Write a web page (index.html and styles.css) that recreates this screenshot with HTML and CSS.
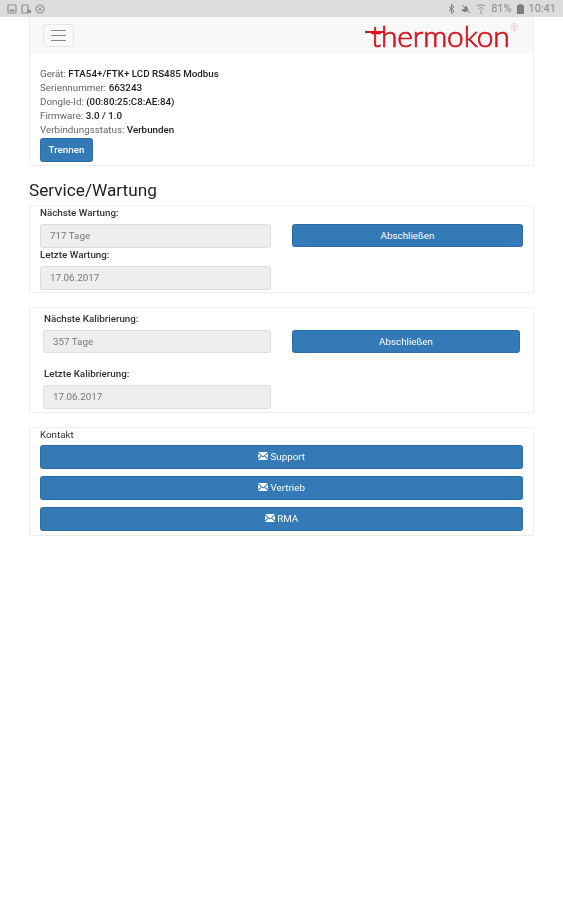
FILE: index.html
```html
<!DOCTYPE html>
<html lang="de">
<head>
    <meta charset="UTF-8">
    <meta name="viewport" content="width=device-width, initial-scale=1.0">
    <title>Thermokon</title>
    <link rel="stylesheet" href="styles.css">
</head>
<body>
    <div class="statusbar">
        <div class="status-left">
            <svg width="10" height="10" viewBox="0 0 10 10"><rect x="1" y="1" width="8" height="8" rx="1" fill="none" stroke="#8f8f8f" stroke-width="1.2"/><rect x="2.5" y="5.5" width="5" height="2" fill="#8f8f8f"/></svg>
            <svg width="10" height="10" viewBox="0 0 10 10"><rect x="1" y="1" width="6" height="8" rx="1" fill="none" stroke="#8f8f8f" stroke-width="1.2"/><rect x="6" y="6" width="4" height="3" fill="#8f8f8f"/></svg>
            <svg width="10" height="10" viewBox="0 0 10 10"><circle cx="5" cy="5" r="4" fill="none" stroke="#8f8f8f" stroke-width="1.2"/><path d="M3 3l4 4M7 3L3 7" stroke="#8f8f8f"/></svg>
        </div>
        <div class="status-right">
            <svg width="8" height="10" viewBox="0 0 8 10"><path d="M1 3l5 4-2.5 2.500V.5L6 3 1 7" fill="none" stroke="#7f7f7f" stroke-width="1"/></svg>
            <svg width="10" height="10" viewBox="0 0 10 10"><path d="M1 1l8 8M1 6l3-1 1-3 2 4-3 2z" fill="#7f7f7f" stroke="#7f7f7f"/></svg>
            <svg width="10" height="10" viewBox="0 0 10 10"><path d="M1 2c2.500-1.500 5.500-1.500 8 0M2.500 4.500c1.500-1 3.500-1 5 0M4 7c.6-.4 1.400-.4 2 0M5 8v2" fill="none" stroke="#8f8f8f"/></svg>
            <span class="status-pct">81%</span>
            <svg width="7" height="10" viewBox="0 0 7 10"><rect x="2" y="0" width="3" height="1" fill="#7f7f7f"/><rect x="0" y="1" width="7" height="9" fill="#7f7f7f"/></svg>
            <span>10:41</span>
        </div>
    </div>

    <div class="page">
        <div class="panel panel-top">
            <div class="navbar">
                <button class="toggle" type="button"><span></span><span></span><span></span></button>
                <div class="logo">thermokon<sup>®</sup></div>
            </div>
            <div class="device">
                <div class="line">Gerät: <b>FTA54+/FTK+ LCD RS485 Modbus</b></div>
                <div class="line">Seriennummer: <b>663243</b></div>
                <div class="line">Dongle-Id: <b>(00:80:25:C8:AE:84)</b></div>
                <div class="line">Firmware: <b>3.0 / 1.0</b></div>
                <div class="line">Verbindungsstatus: <b>Verbunden</b></div>
                <button class="btn btn-small" type="button">Trennen</button>
            </div>
        </div>

        <h2>Service/Wartung</h2>

        <div class="panel service">
            <div class="col">
                <label>Nächste Wartung:</label>
                <input type="text" value="717 Tage" disabled>
                <label>Letzte Wartung:</label>
                <input type="text" value="17.06.2017" disabled>
            </div>
            <div class="col col-btn">
                <button class="btn" type="button">Abschließen</button>
            </div>
        </div>

        <div class="panel service service-cal">
            <div class="col">
                <label>Nächste Kalibrierung:</label>
                <input type="text" value="357 Tage" disabled>
                <label class="label-next">Letzte Kalibrierung:</label>
                <input type="text" value="17.06.2017" disabled>
            </div>
            <div class="col col-btn">
                <button class="btn" type="button">Abschließen</button>
            </div>
        </div>

        <div class="panel contact">
            <label>Kontakt</label>
            <button class="btn" type="button"><svg viewBox="0 0 10 8"><path d="M0 0h10L5 4.500zM0 1.500v5l3-2.700zM10 1.500v5L7 3.800zM3.600 4.400L5 5.600l1.400-1.200L10 8H0z"/></svg> Support</button>
            <button class="btn" type="button"><svg viewBox="0 0 10 8"><path d="M0 0h10L5 4.500zM0 1.500v5l3-2.700zM10 1.500v5L7 3.800zM3.600 4.400L5 5.600l1.400-1.200L10 8H0z"/></svg> Vertrieb</button>
            <button class="btn" type="button"><svg viewBox="0 0 10 8"><path d="M0 0h10L5 4.500zM0 1.500v5l3-2.700zM10 1.500v5L7 3.800zM3.600 4.400L5 5.600l1.400-1.200L10 8H0z"/></svg> RMA</button>
        </div>
    </div>
</body>
</html>
```

FILE: styles.css
```css
body {
    margin: 0;
    background: #fff;
    color: #333;
    font-family: Roboto, "Liberation Sans", sans-serif;
    font-size: 9.8px;
    filter: blur(0.5px);
}

.statusbar {
    display: flex;
    justify-content: space-between;
    align-items: center;
    height: 17px;
    padding: 0 7px;
    background: #dcdcdc;
    color: #8a8a8a;
    font-size: 11px;
}

.status-left {
    display: flex;
    gap: 4px;
}

.status-right {
    display: flex;
    align-items: center;
    gap: 5px;
}

.page {
    width: 505px;
    margin-left: 29px;
}

.panel {
    margin-bottom: 15px;
    background: #fff;
    border: 1px solid #ededed;
    border-top: 0;
    border-radius: 2px;
    box-shadow: 0 -1px 0 #f3f3f3;
}

.panel-top {
    margin-bottom: 14px;
    box-shadow: none;
}

.navbar {
    display: flex;
    justify-content: space-between;
    height: 37px;
    padding: 7px 15px 0 13px;
    box-sizing: border-box;
    background: #f8f8f8;
}

.toggle {
    display: flex;
    flex-direction: column;
    justify-content: center;
    gap: 3.500px;
    width: 31px;
    height: 23px;
    padding: 0 7px;
    background: #f8f8f8;
    border: 1px solid #e6e6e6;
    border-radius: 3px;
}

.toggle span {
    display: block;
    height: 1.500px;
    width: 100%;
    background: #888;
}

.logo {
    position: relative;
    margin-top: -7px;
    color: #d9121f;
    font-family: Lato, sans-serif;
    font-weight: 300;
    font-size: 30px;
    line-height: 37px;
    letter-spacing: -.2px;
    -webkit-text-stroke: .7px #d9121f;
}

/* the long cross bar of the t in the logo */
.logo::before {
    content: "";
    position: absolute;
    left: -6px;
    top: 14px;
    width: 20px;
    height: 2px;
    background: #d9121f;
}

.logo sup {
    margin-left: 1px;
    font-size: 9px;
    color: #e88a90;
    -webkit-text-stroke: 0;
    vertical-align: 16px;
    line-height: 0;
}

.device {
    padding: 13px 10px 3px;
}

.line {
    height: 14px;
    line-height: 14px;
    color: #666;
}

.line b {
    color: #222;
    font-weight: 500;
}

.btn {
    display: block;
    width: 100%;
    height: 23.500px;
    padding: 0;
    color: #fff;
    background: #337ab7;
    border: 1px solid #2e6da4;
    border-radius: 2.500px;
    font: inherit;
}

.btn svg {
    width: 10px;
    height: 8px;
    fill: #fff;
}

.btn-small {
    width: 53px;
    margin-top: 1px;
    font-weight: 500;
}

h2 {
    margin: 0;
    height: 26px;
    padding-top: 2px;
    box-sizing: border-box;
    font-weight: 400;
    font-size: 17.200px;
    line-height: 16px;
    color: #222;
}

.service {
    display: grid;
    grid-template-columns: 231px 231px;
    gap: 21px;
    height: 87px;
    padding: 0 10px;
    box-sizing: border-box;
}

label {
    display: block;
    height: 14px;
    line-height: 14px;
    font-weight: 500;
    color: #333;
}

input {
    display: block;
    width: 100%;
    height: 24px;
    margin-top: 4px;
    padding: 0 9px;
    box-sizing: border-box;
    background: #eee;
    color: #777;
    border: 1px solid #ddd;
    border-radius: 2.500px;
    font: inherit;
}

.col-btn {
    padding-top: 18px;
}

.service-cal {
    height: 105px;
    padding: 4px 10px 0 13px;
    grid-template-columns: 228px 228px;
}

.service-cal label {
    padding-left: 1px;
}

.service-cal input {
    height: 23.500px;
}

.service-cal .label-next {
    margin-top: 14px;
}

.service-cal .col-btn {
    padding-top: 18px;
}

.contact {
    display: flex;
    flex-direction: column;
    gap: 7.500px;
    height: 108px;
    padding: 0 10px;
    box-sizing: border-box;
}

.contact label {
    height: 13px;
    line-height: 13px;
    margin-bottom: -3px;
    font-weight: 400;
}
```
